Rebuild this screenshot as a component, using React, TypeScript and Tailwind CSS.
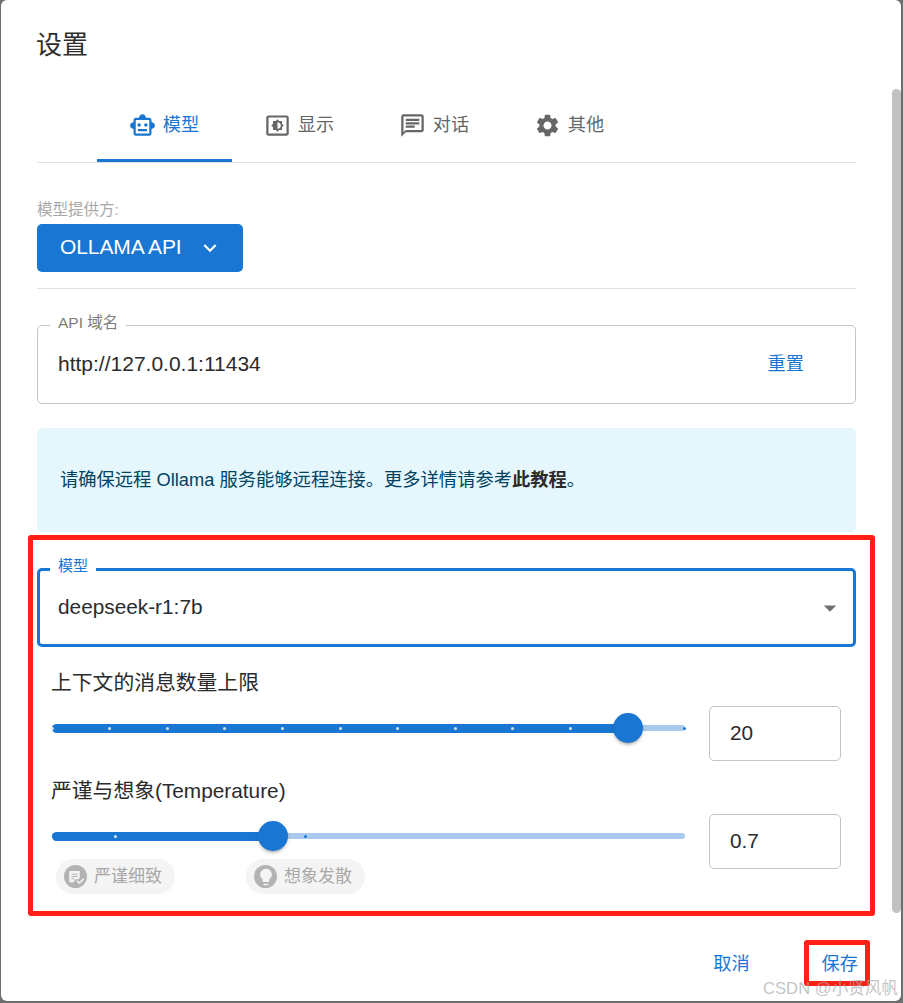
const font = { fontFamily: '"Liberation Sans", "Noto Sans CJK SC", sans-serif' };

const robotPath =
  'M20 9V7c0-1.1-.9-2-2-2h-3c0-1.66-1.34-3-3-3S9 3.34 9 5H6c-1.1 0-2 .9-2 2v2c-1.66 0-3 1.34-3 3s1.34 3 3 3v4c0 1.1.9 2 2 2h12c1.1 0 2-.9 2-2v-4c1.66 0 3-1.34 3-3s-1.34-3-3-3zm-2 10H6V7h12v12zm-9-6c-.83 0-1.5-.67-1.5-1.5S8.17 10 9 10s1.5.67 1.5 1.5S9.83 13 9 13zm7.5-1.5c0 .83-.67 1.5-1.5 1.5s-1.5-.67-1.5-1.5.67-1.5 1.5-1.5 1.5.67 1.5 1.5zM8 15h8v2H8v-2z';
const brightnessPath =
  'M20 3H4c-1.11 0-2 .89-2 2v14c0 1.11.89 2 2 2h16c1.11 0 2-.89 2-2V5c0-1.11-.89-2-2-2zm0 16.01H4V4.99h16v14.02zM8 16h2.5l1.5 1.5 1.5-1.5H16v-2.5l1.5-1.5-1.5-1.5V8h-2.5L12 6.5 10.5 8H8v2.5L6.5 12 8 13.5V16zm4-7c1.66 0 3 1.34 3 3s-1.34 3-3 3V9z';
const chatPath =
  'M20 2H4c-1.1 0-2 .9-2 2v18l4-4h14c1.1 0 2-.9 2-2V4c0-1.1-.9-2-2-2zm0 14H6l-2 2V4h16v12zM6 12h8v2H6zm0-3h12v2H6zm0-3h12v2H6z';
const gearPath =
  'M19.14 12.94c.04-.3.06-.61.06-.94 0-.32-.02-.64-.07-.94l2.03-1.58c.18-.14.23-.41.12-.61l-1.92-3.32c-.12-.22-.37-.29-.59-.22l-2.39.96c-.5-.38-1.03-.7-1.62-.94l-.36-2.54c-.04-.24-.24-.41-.48-.41h-3.84c-.24 0-.43.17-.47.41l-.36 2.54c-.59.24-1.13.57-1.62.94l-2.39-.96c-.22-.08-.47 0-.59.22L2.74 8.87c-.12.21-.08.47.12.61l2.03 1.58c-.05.3-.09.63-.09.94s.02.64.07.94l-2.03 1.58c-.18.14-.23.41-.12.61l1.92 3.32c.12.22.37.29.59.22l2.39-.96c.5.38 1.03.7 1.62.94l.36 2.54c.05.24.24.41.48.41h3.84c.24 0 .44-.17.47-.41l.36-2.54c.59-.24 1.13-.56 1.62-.94l2.39.96c.22.08.47 0 .59-.22l1.92-3.32c.12-.22.07-.47-.12-.61l-2.01-1.58zM12 15.6c-1.98 0-3.6-1.62-3.6-3.6s1.62-3.6 3.6-3.6 3.6 1.62 3.6 3.6-1.62 3.6-3.6 3.6z';

const Icon = ({ d, className }: { d: string; className: string }) => (
  <svg viewBox="0 0 24 24" fill="currentColor" className={className}>
    <path d={d} />
  </svg>
);

const tabs = [
  { label: '模型', d: robotPath, active: true },
  { label: '显示', d: brightnessPath, active: false },
  { label: '对话', d: chatPath, active: false },
  { label: '其他', d: gearPath, active: false },
];

const Tabs = () => (
  <div className="flex h-[74px] border-b border-[#e0e0e0] pl-[60px] box-content">
    {tabs.map((t) => (
      <div
        key={t.label}
        className={
          t.active
            ? 'w-[135px] pt-[4px] pr-[1px] flex items-center justify-center gap-[7px] text-[18.2px] text-[#1976d2] border-b-[3px] border-[#1976d2]'
            : 'w-[135px] pt-[4px] pr-[1px] flex items-center justify-center gap-[7px] text-[18.2px] text-[#666666] border-b-[3px] border-transparent'
        }
      >
        <Icon d={t.d} className="w-[27px] h-[27px]" />
        <span>{t.label}</span>
      </div>
    ))}
  </div>
);

const Slider = ({ percent, marks, endMark }: { percent: number; marks: number[]; endMark?: boolean }) => (
  <div className="relative flex-1 h-[36px] mt-[4px] flex items-center">
    <div className="w-full h-[6px] rounded-full bg-[#a9caec]" />
    <div className="absolute left-0 top-[13.5px] h-[9px] rounded-full bg-[#1976d2]" style={{ width: `${percent}%` }} />
    {marks.map((m) => (
      <span
        key={m}
        className={
          m < percent
            ? 'absolute top-[16.5px] -ml-[1px] w-[3px] h-[3px] rounded-full bg-[#d6e7f8]'
            : 'absolute top-[16.5px] -ml-[1px] w-[3px] h-[3px] rounded-full bg-[#1976d2]'
        }
        style={{ left: `${m}%` }}
      />
    ))}
    {endMark && <span className="absolute right-[-1px] top-[16.5px] w-[3px] h-[3px] rounded-full bg-[#1976d2]" />}
    <span
      className="absolute top-[3px] w-[30px] h-[30px] -ml-[15px] rounded-full bg-[#1976d2] shadow-[0_3px_3px_-2px_rgba(0,0,0,0.25),0_2px_4px_rgba(0,0,0,0.14)]"
      style={{ left: `${percent}%` }}
    />
  </div>
);

const NumberBox = ({ value }: { value: string }) => (
  <div className="w-[132px] h-[55px] shrink-0 ml-[24px] flex items-center pl-[20px] pb-[2px] text-[20.8px] text-[#2b2b2b] border border-[#c4c4c4] rounded-[5px]">
    {value}
  </div>
);

const Chip = ({ label, d, iconClassName, className }: { label: string; d: string; iconClassName: string; className: string }) => (
  <div className={className}>
    <span className="w-[23px] h-[23px] rounded-full bg-[#b3b3b3] flex items-center justify-center text-[#f4f4f4]">
      <Icon d={d} className={iconClassName} />
    </span>
    <span>{label}</span>
  </div>
);

export default function App() {
  return (
    <div className="relative w-[903px] h-[1003px] bg-[#6e6e6e] overflow-hidden" style={font}>
      <div className="relative w-[900px] h-[1001px] ml-[1px] bg-white rounded-[6px] overflow-hidden text-[#2b2b2b]">
        <div className="pl-[36px] pr-[45px]">
          <div className="h-[88px] pt-[29px] -ml-[1px] text-[26px] leading-[32px] text-[#2e2e2e]">设置</div>
          <Tabs />

          <div className="pt-[38px] text-[15.5px] leading-[18px] text-[#a8a8a8]">模型提供方:</div>
          <div className="mt-[5px] w-[206px] h-[48px] flex items-center pl-[23px] pb-[2px] rounded-[5px] bg-[#1976d2] text-white text-[21px]">
            <span className="tracking-[-0.1px]">OLLAMA API</span>
            <svg viewBox="0 0 24 24" fill="currentColor" className="w-[26px] h-[26px] ml-[15px] mt-[2px]">
              <path d="M16.59 8.59 12 13.17 7.41 8.59 6 10l6 6 6-6z" />
            </svg>
          </div>
          <div className="mt-[16px] border-t border-[#e0e0e0]" />

          <div className="relative mt-[36px] h-[79px] flex items-center justify-between pl-[20px] pr-[51px] border border-[#c4c4c4] rounded-[5px]">
            <span className="absolute left-[12px] top-[-13px] px-[8px] bg-white text-[15.5px] leading-[20px] text-[#7d7d7d]">API 域名</span>
            <span className="pb-[2px] text-[21px]">http://127.0.0.1:11434</span>
            <span className="text-[18.2px] text-[#1976d2]">重置</span>
          </div>

          <div className="mt-[24px] h-[104px] flex items-center pl-[23px] rounded-[5px] bg-[#e5f6fd] text-[18.3px] text-[#014361]">
            <span>
              请确保远程 Ollama 服务能够远程连接。更多详情请参考<b className="text-[#2b2b2b]">此教程</b>。
            </span>
          </div>

          <div className="relative mt-[36px] h-[79px] flex items-center justify-between pl-[18px] pr-[16px] border-[3px] border-[#1976d2] rounded-[5px]">
            <span className="absolute left-[10px] top-[-15px] px-[8px] bg-white text-[15px] leading-[20px] text-[#1976d2]">模型</span>
            <span className="pb-[2px] text-[20.8px]">deepseek-r1:7b</span>
            <svg viewBox="0 0 24 24" fill="#707070" className="w-[30px] h-[30px] -mr-[8px]">
              <path d="M7 10l5 5 5-5z" />
            </svg>
          </div>

          <div className="pl-[15px] pr-[15px]">
            <div className="mt-[22px] -ml-[1px] text-[20.8px] leading-[28px]">上下文的消息数量上限</div>
            <div className="flex items-start mt-[9px]">
              <Slider percent={91} marks={[0, 9.08, 18.17, 27.25, 36.34, 45.42, 54.5, 63.59, 72.67, 81.76]} endMark />
              <NumberBox value="20" />
            </div>
            <div className="mt-[16px] -ml-[1px] text-[20.8px] leading-[28px]">严谨与想象(Temperature)</div>
            <div className="flex items-start mt-[9px]">
              <Slider percent={34.9} marks={[10, 40]} />
              <NumberBox value="0.7" />
            </div>
            <div className="flex -mt-[10px] text-[17px] text-[#a8a8a8]">
              <Chip
                label="严谨细致"
                d="M3 4h14v9.5l-1.5 1.5H11l-2 4H3zm3 3.5V9h8V7.5zm0 3V12h8v-1.5zm0 3V15h3.5v-1.5zM21.6 13.5l1.4 1.4-6.6 6.6-3.9-3.9 1.4-1.4 2.5 2.5z"
                iconClassName="w-[18px] h-[18px]"
                className="ml-[4px] w-[119px] h-[35px] flex items-center gap-[7px] pl-[8px] rounded-full bg-[#f4f4f4]"
              />
              <Chip
                label="想象发散"
                d="M9 21c0 .55.45 1 1 1h4c.55 0 1-.45 1-1v-1H9v1zm3-19C8.14 2 5 5.14 5 9c0 2.38 1.19 4.47 3 5.74V17c0 .55.45 1 1 1h6c.55 0 1-.45 1-1v-2.26c1.81-1.27 3-3.36 3-5.74 0-3.86-3.14-7-7-7z"
                iconClassName="w-[20px] h-[20px]"
                className="ml-[71px] w-[119px] h-[35px] flex items-center gap-[7px] pl-[8px] rounded-full bg-[#f4f4f4]"
              />
            </div>
          </div>

          <div className="flex justify-end gap-[72px] -mr-[2px] mt-[57px] text-[18.2px] text-[#1976d2]">
            <span>取消</span>
            <span>保存</span>
          </div>
        </div>

        <div className="absolute right-[0px] top-[89px] w-[9px] h-[824px] rounded-full bg-[#c1c1c1]" />
      </div>

      <div className="absolute left-[28px] top-[535px] w-[847px] h-[381px] border-[5px] border-[#ff2015] rounded-[3px]" />
      <div className="absolute left-[804px] top-[940px] w-[66px] h-[46px] border-[5px] border-[#ff2015] rounded-[3px]" />
      <span className="absolute left-[763px] top-[978px] text-[16.5px] leading-[20px] tracking-[0.1px] text-[#a9a9a9]/70">CSDN @小贤风帆</span>
    </div>
  );
}
